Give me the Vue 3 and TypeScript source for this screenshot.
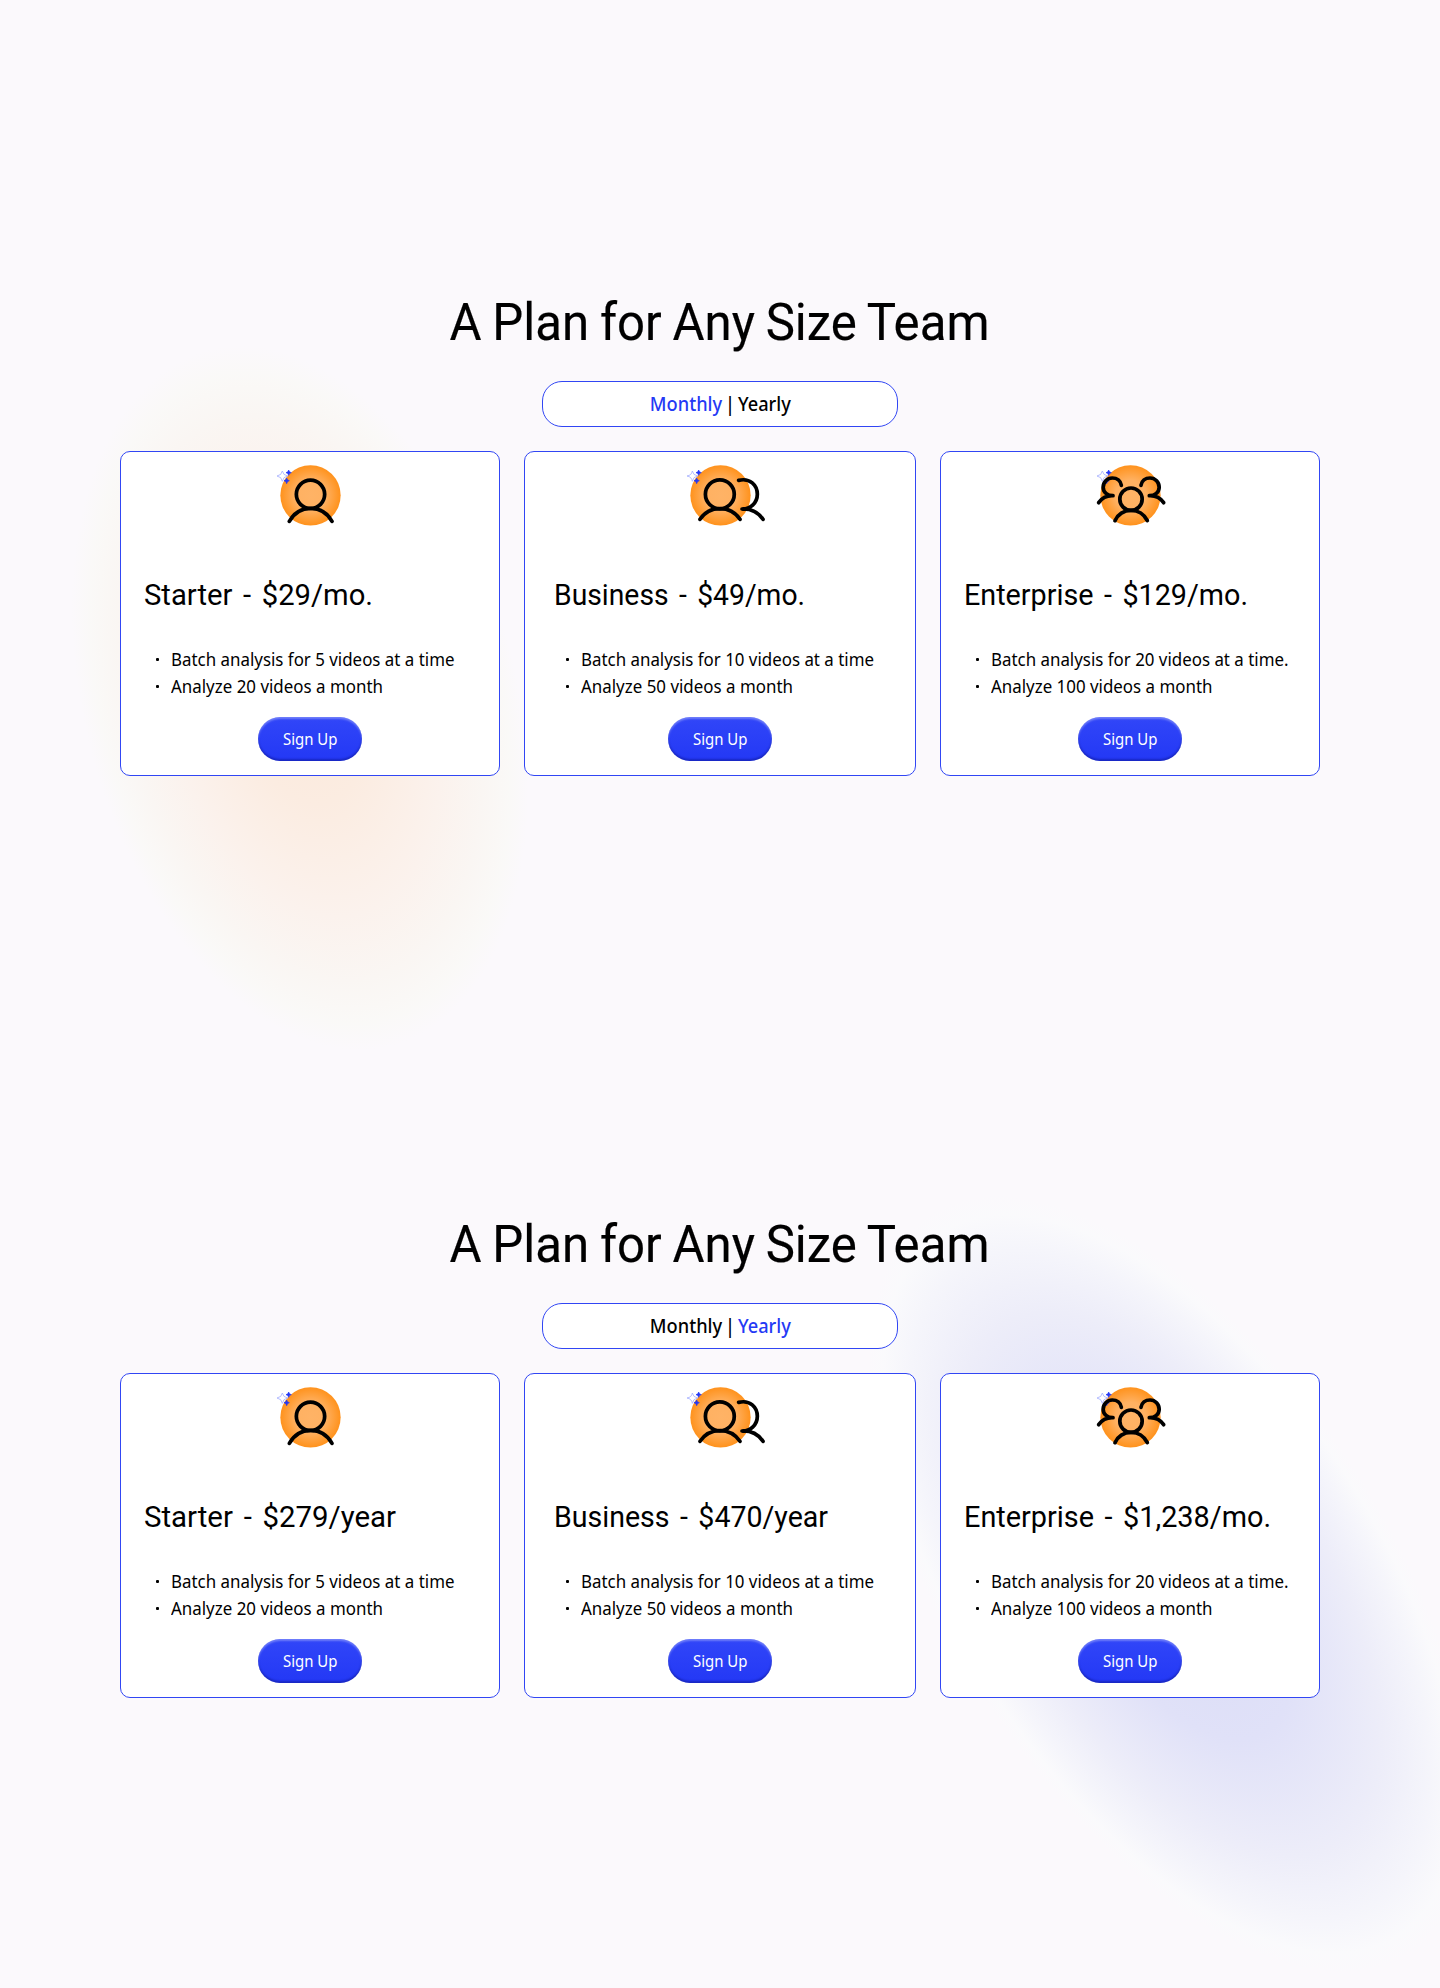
<script setup lang="ts">
type Cycle = 'monthly' | 'yearly'
type IconKind = 'single' | 'pair' | 'group'

interface Line { text: string; width: number }
interface Plan { icon: IconKind; title: Line; features: Line[] }
interface Section { cycle: Cycle; plans: Plan[] }

const starter: Line[] = [
  { text: 'Batch analysis for 5 videos at a time', width: 283.5 },
  { text: 'Analyze 20 videos a month', width: 212 },
]
const business: Line[] = [
  { text: 'Batch analysis for 10 videos at a time', width: 293 },
  { text: 'Analyze 50 videos a month', width: 212 },
]
const enterprise: Line[] = [
  { text: 'Batch analysis for 20 videos at a time.', width: 297.5 },
  { text: 'Analyze 100 videos a month', width: 221.5 },
]

const sections: Section[] = [
  {
    cycle: 'monthly',
    plans: [
      { icon: 'single', title: { text: 'Starter - $29/mo.', width: 229 }, features: starter },
      { icon: 'pair', title: { text: 'Business - $49/mo.', width: 251 }, features: business },
      { icon: 'group', title: { text: 'Enterprise - $129/mo.', width: 284 }, features: enterprise },
    ],
  },
  {
    cycle: 'yearly',
    plans: [
      { icon: 'single', title: { text: 'Starter - $279/year', width: 252 }, features: starter },
      { icon: 'pair', title: { text: 'Business - $470/year', width: 274 }, features: business },
      { icon: 'group', title: { text: 'Enterprise - $1,238/mo.', width: 307 }, features: enterprise },
    ],
  },
]

// Condenses a line of text horizontally so that it occupies the given width.
const vFit = {
  mounted(el: HTMLElement, binding: { value: number }) {
    const natural = el.getBoundingClientRect().width
    if (natural > 0) el.style.transform = `scaleX(${binding.value / natural})`
  },
}
</script>

<template>
  <main class="page">
    <div class="glow glow-orange"></div>
    <div class="glow glow-blue"></div>

    <section v-for="section in sections" :key="section.cycle" class="pricing">
      <h1 class="heading"><span v-fit="540" class="fit center">A Plan for Any Size Team</span></h1>

      <div class="toggle">
        <span v-fit="141" class="fit center">
          <span :class="{ active: section.cycle === 'monthly' }">Monthly</span> |
          <span :class="{ active: section.cycle === 'yearly' }">Yearly</span>
        </span>
      </div>

      <div class="cards">
        <article v-for="plan in section.plans" :key="plan.icon" class="card">
          <div class="content">
            <svg class="icon" viewBox="0 0 300 240" width="100" height="80" aria-hidden="true">
              <defs>
                <radialGradient :id="`disc-${section.cycle}-${plan.icon}`">
                  <stop offset="0" stop-color="#ffb366" />
                  <stop offset="0.5" stop-color="#ffb162" />
                  <stop offset="1" stop-color="#ff921c" />
                </radialGradient>
              </defs>
              <circle cx="151.5" cy="121" r="90.5" :fill="`url(#disc-${section.cycle}-${plan.icon})`" />
              <path d="M67 48Q69 61 83 63Q69 65 67 79Q65 65 51 63Q65 61 67 48Z" fill="#fff" stroke="#a3adff" stroke-width="2.4" />
              <path d="M86 45Q87 52 94 53Q87 54 86 61Q85 54 78 53Q85 52 86 45ZM80 69Q81 76 88 77Q81 78 80 86Q79 78 72 77Q79 76 80 69Z" fill="#2438f5" stroke="#2438f5" stroke-width="2" />

              <g fill="none" stroke="#000" stroke-width="11.2" stroke-linecap="round" stroke-linejoin="round">
                <template v-if="plan.icon === 'single'">
                  <circle cx="151.5" cy="118" r="42.5" />
                  <path d="M88 199C102 174 126 160 152 160S202 174 216 199" />
                </template>
                <template v-else-if="plan.icon === 'pair'">
                  <circle cx="149.5" cy="118" r="43.3" />
                  <path d="M90 193C104 172 126 161 149.5 161S196 172 210 193" />
                  <path d="M206 76C240 68 262 90 262 118C262 145 240 163 216 162C243 161 265 172 279 193" />
                </template>
                <template v-else>
                  <circle cx="153" cy="132.5" r="33.5" />
                  <path d="M105 197C113 178 132 166 153 166S193 178 202 197" />
                  <path d="M124 91C122 78 111 69 97 69C81 69 69.5 82 69.5 97C69.5 112 82 122 99 122C80 121 65 130 56 143" />
                  <path d="M183 91C185 78 196 69 210 69C226 69 237.5 82 237.5 97C237.5 112 225 122 208 122C227 121 242 130 251 143" />
                </template>
              </g>
            </svg>

            <h2 class="plan-title"><span v-fit="plan.title.width" class="fit">{{ plan.title.text }}</span></h2>

            <ul class="features">
              <li v-for="feature in plan.features" :key="feature.text">
                <span v-fit="feature.width" class="fit">{{ feature.text }}</span>
              </li>
            </ul>

            <button class="sign-up" type="button"><span v-fit="54.5" class="fit center">Sign Up</span></button>
          </div>
        </article>
      </div>
    </section>
  </main>
</template>

<style>
body {
  background: #fbf9fc;
}
</style>

<style scoped>
.page {
  position: relative;
  height: 1988px;
  overflow: hidden;
  background: #fbf9fc;
  color: #000;
  font-family: "Noto Sans", "Open Sans", sans-serif;
}

.glow {
  position: absolute;
  border-radius: 50%;
}

.glow-orange {
  left: 84px;
  top: 338px;
  width: 432px;
  height: 720px;
  transform: rotate(-15deg);
  background: radial-gradient(closest-side, #fbe9db, #fbece1 30%, #fbf2ed 62%, #faf6f3 80%, rgba(250, 249, 247, 0.9) 92%, rgba(251, 249, 252, 0));
}

.glow-blue {
  left: 952px;
  top: 1143px;
  width: 436px;
  height: 882px;
  transform: rotate(-33deg);
  background: radial-gradient(closest-side, #dadcf6, #e0e1f8 40%, #ededf9 70%, #f5f5fb 86%, rgba(250, 250, 252, 0.9) 95%, rgba(251, 249, 252, 0));
}

.pricing {
  position: relative;
  box-sizing: border-box;
  height: 922px;
  padding-top: 292px;
  display: flex;
  flex-direction: column;
  align-items: center;
}

.fit {
  display: inline-block;
  flex: none;
  white-space: nowrap;
  transform-origin: left center;
}

.fit.center {
  transform-origin: center;
}

.heading {
  margin: 0 2px 29px 0;
  font: 400 52.5px/60px Roboto, sans-serif;
  word-spacing: -1.5px;
  -webkit-text-stroke: 0.2px #000;
}

.toggle {
  box-sizing: border-box;
  width: 356px;
  height: 46px;
  padding-bottom: 1px;
  border: 1px solid #3146f4;
  border-radius: 20px;
  background: #fff;
  display: flex;
  align-items: center;
  justify-content: center;
  font-size: 20px;
  font-weight: 500;
  line-height: 28px;
  word-spacing: -2px;
}

.active {
  color: #2439f5;
}

.cards {
  width: 1200px;
  margin-top: 24px;
  display: grid;
  grid-template-columns: 380px 392px 380px;
  gap: 24px;
}

.card {
  box-sizing: border-box;
  height: 325px;
  padding-top: 3px;
  border: 1px solid #3146f4;
  border-radius: 10px;
  background: #fff;
  display: flex;
  justify-content: center;
}

.content {
  width: 330px;
  display: flex;
  flex-direction: column;
}

.icon {
  align-self: center;
  display: block;
  overflow: visible;
}

.plan-title {
  margin: 42px 0 0 -1.5px;
  font: 400 29.7px/36px Roboto, sans-serif;
  word-spacing: 3.5px;
}

.features {
  margin: 33px 0 0;
  padding: 0;
  list-style: none;
  font-size: 18px;
  line-height: 27px;
}

.features li {
  display: flex;
  align-items: center;
  height: 27px;
}

.features li::before {
  content: "";
  flex: none;
  width: 3px;
  height: 3px;
  margin: 0 11.5px 1px 11px;
  border-radius: 1px;
  background: #000;
}

.sign-up {
  align-self: center;
  width: 103.4px;
  height: 44px;
  margin: 17px 0 0;
  padding: 0;
  border: 0;
  border-radius: 22px;
  background: linear-gradient(#3146f8, #2338f5);
  box-shadow: inset 0 2px 2px rgba(255, 255, 255, 0.3), inset 0 -2px 2px rgba(10, 15, 120, 0.4);
  color: #fff;
  font: 400 16px/22px "Noto Sans", "Open Sans", sans-serif;
}
</style>
